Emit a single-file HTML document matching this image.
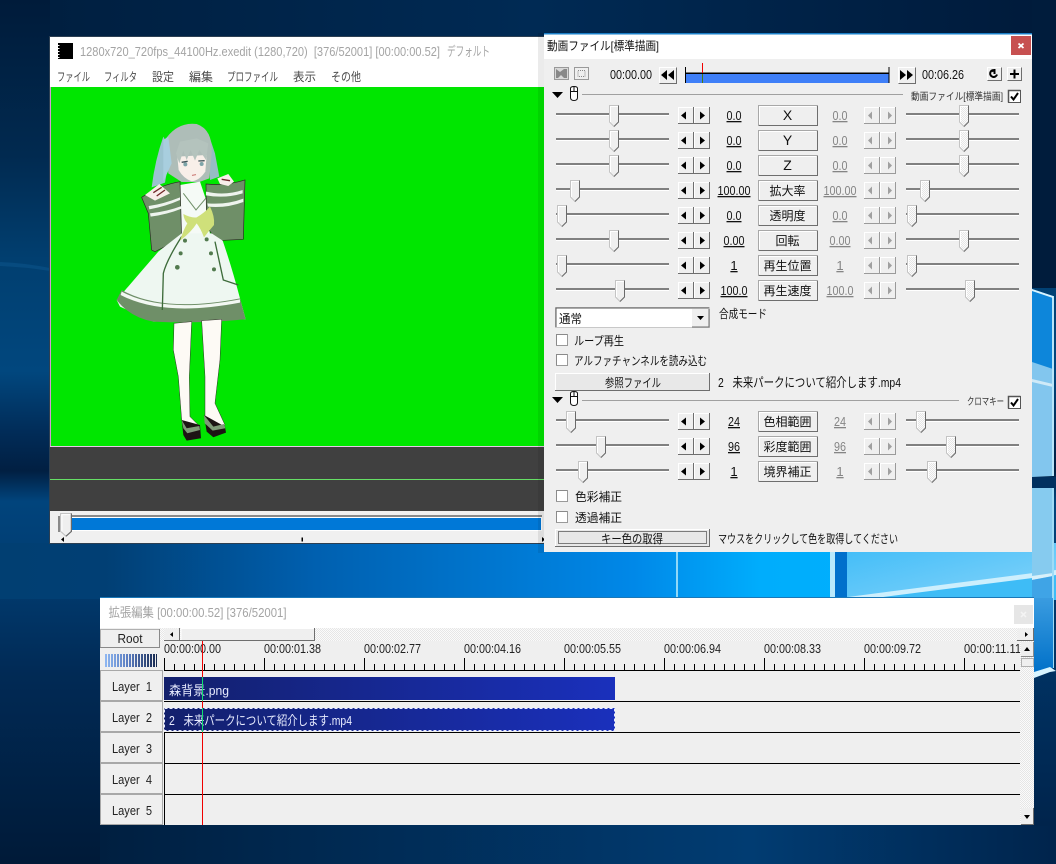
<!DOCTYPE html>
<html lang="ja"><head><meta charset="utf-8"><title>AviUtl</title>
<style>
html,body{margin:0;padding:0;background:#001c3c;overflow:hidden}
svg{display:block}
text{font-family:"Liberation Sans","Noto Sans CJK JP",sans-serif;font-size:12px;fill:#111;white-space:pre}
.m{fill:#4a4a4a}
.t{fill:#a4a4a4;font-size:13px}
.n{font-size:13px}
.v{text-decoration:underline;text-anchor:middle;font-size:13px}
.d{text-decoration:underline;text-anchor:middle;fill:#858585;font-size:13px}
.c{text-anchor:middle}
.x{font-size:14px}
.s{font-size:10px;fill:#333}
.cl{fill:#e8ecff;font-size:13px}
.r{fill:#222;font-size:13px}
</style></head><body>
<svg xmlns="http://www.w3.org/2000/svg" width="1056" height="864" viewBox="0 0 1056 864">
<defs>
<linearGradient id="bgv" x1="0" y1="0" x2="0" y2="1">
<stop offset="0" stop-color="#001b3a"/><stop offset=".18" stop-color="#012a50"/><stop offset=".3" stop-color="#013f70"/><stop offset=".43" stop-color="#01477e"/><stop offset=".5" stop-color="#012c58"/><stop offset=".545" stop-color="#011f42"/><stop offset=".58" stop-color="#01447c"/><stop offset=".66" stop-color="#013d72"/><stop offset=".78" stop-color="#012a55"/><stop offset="1" stop-color="#001a38"/>
</linearGradient>
<linearGradient id="bgtop"><stop offset="0" stop-color="#001f40"/><stop offset=".48" stop-color="#002a54"/><stop offset="1" stop-color="#001a3a"/></linearGradient>
<linearGradient id="bgbot"><stop offset="0" stop-color="#001f40"/><stop offset=".68" stop-color="#013c72"/><stop offset="1" stop-color="#00244c"/></linearGradient>
<linearGradient id="bgmid"><stop offset="0" stop-color="#013f72"/><stop offset=".1" stop-color="#013f74"/><stop offset=".3" stop-color="#0060b0"/><stop offset=".6" stop-color="#0088e8"/><stop offset=".72" stop-color="#00adfc"/><stop offset="1" stop-color="#00b4ff"/></linearGradient>
<linearGradient id="rstrip" x1="0" y1="0" x2="0" y2="1"><stop offset="0" stop-color="#01386c"/><stop offset="1" stop-color="#00244c"/></linearGradient>
<linearGradient id="sky" x1="0" y1="0" x2="1" y2="1"><stop offset="0" stop-color="#3fbcf8"/><stop offset="1" stop-color="#86d4fa"/></linearGradient>
<linearGradient id="pane" x1="0" y1="0" x2="0" y2="1"><stop offset="0" stop-color="#3a9ce0"/><stop offset="1" stop-color="#0070c8"/></linearGradient>
<linearGradient id="clip1" gradientUnits="userSpaceOnUse" x1="164" y1="0" x2="615" y2="0"><stop offset="0" stop-color="#13206c"/><stop offset="1" stop-color="#1a30bc"/></linearGradient>
<linearGradient id="strip" gradientUnits="userSpaceOnUse" x1="105" y1="0" x2="157" y2="0"><stop offset="0" stop-color="#8fb8f2"/><stop offset=".45" stop-color="#5a7cc0"/><stop offset="1" stop-color="#16284f"/></linearGradient>
<pattern id="dith" width="2" height="2" patternUnits="userSpaceOnUse"><rect width="2" height="2" fill="#fbfbfb"/><rect width="1" height="1" fill="#e6e6e6"/><rect x="1" y="1" width="1" height="1" fill="#e6e6e6"/></pattern>
<clipPath id="rulerclip"><rect x="160" y="641" width="860" height="30"/></clipPath>
<g id="thumb"><path d="M.5,.5H9.5V17L5,21.5L.5,17Z" fill="#efefef" stroke="#c4c4c4"/><path d="M1.500,17V1.500H9" fill="none" stroke="#fff"/><path d="M9.500,.5V17L5,21.500" fill="none" stroke="#6a6a6a"/></g>
<g id="thumbd"><path d="M.5,.5H9.5V17L5,21.5L.5,17Z" fill="url(#dith)" stroke="#c4c4c4"/><path d="M1.500,17V1.500H9" fill="none" stroke="#fff"/><path d="M9.500,.5V17L5,21.500" fill="none" stroke="#6a6a6a"/></g>
<g id="sb"><rect width="16" height="17" fill="#efefef"/><path d="M.5,16V.5H15" fill="none" stroke="#fff"/><path d="M0,16.5H15.5V0" fill="none" stroke="#6e6e6e"/></g>
<g id="sbd"><rect width="16" height="17" fill="#efefef"/><path d="M.5,16V.5H15" fill="none" stroke="#fff"/><path d="M0,16.5H15.5V0" fill="none" stroke="#9a9a9a"/></g>
<g id="base">
<rect x="556" y="-1" width="113" height="2" fill="#808080"/><rect x="556" y="1" width="113" height="1" fill="#fff"/>
<rect x="906" y="-1" width="113" height="2" fill="#808080"/><rect x="906" y="1" width="113" height="1" fill="#fff"/>
<use href="#sb" x="678" y="-7"/><use href="#sb" x="694" y="-7"/>
<path d="M681,1.500L686,-2.500V5.500Z M705,1.500L700,-2.500V5.500Z" fill="#000"/>
<use href="#sbd" x="864" y="-7"/><use href="#sbd" x="880" y="-7"/>
<path d="M868,1.500L872,-2.500V5.500Z M892,1.500L888,-2.500V5.500Z" fill="#a0a0a0"/>
<rect x="758.500" y="-8.500" width="59" height="20" fill="#efefef" stroke="#a8a8a8"/>
<path d="M759.500,10V-7.500H816" fill="none" stroke="#fff"/>
<path d="M759,11.500H817.500V-8" fill="none" stroke="#6e6e6e"/>
</g>
<g id="sec"><path d="M552,0H563L557.500,6Z" fill="#000"/><path d="M570.500,-3.500V5.500Q570.500,8.500 574,8.500Q577.500,8.500 577.500,5.500V-3.500Q577.500,-5.500 574,-5.500Q570.500,-5.500 570.500,-3.500ZM570.500,-.500H577.500M574,-5.500V-.500" fill="#fff" stroke="#111"/></g>
<g id="chk"><rect x=".5" y=".5" width="12" height="12" fill="#fff" stroke="#555" stroke-width="1"/><path d="M.5,12.500V.5H12.500" fill="none" stroke="#555" stroke-width="1.500"/><path d="M3,6.500L5.500,9.500L10,3" fill="none" stroke="#000" stroke-width="2"/></g>
<g id="cb"><rect x=".5" y=".5" width="11" height="11" fill="#fff" stroke="#9a9a9a"/><path d="M.5,11V.5H11" fill="none" stroke="#8a8a8a"/></g>
</defs>

<!-- desktop -->
<rect width="1056" height="864" fill="url(#bgv)"/>
<rect x="50" width="1006" height="37" fill="url(#bgtop)"/>
<rect x="1032" y="0" width="24" height="288" fill="#001c3c"/>
<rect x="0" y="543" width="1056" height="56" fill="url(#bgmid)"/>
<rect x="100" y="825" width="956" height="39" fill="url(#bgbot)"/>
<rect x="1032" y="598" width="24" height="228" fill="url(#rstrip)"/>
<path d="M0,262Q25,263 50,268V271Q25,267 0,266Z" fill="#15609c" opacity=".35"/>
<!-- windows logo -->
<rect x="676" y="543" width="2" height="56" fill="#8fd8f8"/>
<rect x="830" y="543" width="5" height="56" fill="#b8e8fc"/>
<rect x="835" y="543" width="12" height="56" fill="#0070cc"/>
<rect x="847" y="543" width="209" height="56" fill="url(#sky)"/>
<path d="M848,597L1056,570V599H848Z" fill="#cdeffd"/>
<path d="M860,600L1056,575V600Z" fill="#3ebcf6"/>
<path d="M1032,289L1053,296V476L1032,477Z" fill="#82c6ee"/>
<path d="M1032,289L1053,296V369L1032,362Z" fill="#0d86da"/>
<path d="M1032,379L1053,384V387L1032,382Z" fill="#cfeaf8"/>
<rect x="1052" y="296" width="2" height="180" fill="#b8e6fa"/>
<path d="M1032,289L1053,296V298L1032,291Z" fill="#d8f4ff"/>
<rect x="1032" y="477" width="24" height="11" fill="#01305f"/>
<rect x="1032" y="488" width="21" height="110" fill="#86cbef"/>
<path d="M1032,576L1053,573V576L1032,580Z" fill="#d8f0fa"/>
<path d="M1032,580L1053,576V600H1032Z" fill="#3fa4e6"/>
<rect x="1052" y="488" width="2" height="180" fill="#9fdcf6"/>
<path d="M1034,598H1053V668L1034,674Z" fill="url(#pane)"/>
<path d="M1034,672L1050,667L1056,671L1050,672L1034,678Z" fill="#d8f4ff"/>

<!-- main window -->
<rect x="49.500" y="36.500" width="496" height="507" fill="#f0f0f0" stroke="#2c3f52"/>
<rect x="50" y="37" width="495" height="50" fill="#fff"/>
<rect x="60" y="43" width="13" height="16" fill="#000"/>
<path d="M58,43h2v16h-2z" fill="#000"/>
<path d="M58,45h1.500v1h-1.500zM58,48h1.500v1h-1.500zM58,51h1.500v1h-1.500zM58,54h1.500v1h-1.500zM58,57h1.500v1h-1.500z" fill="#fff"/>
<text x="80" y="56" class="t" textLength="360" lengthAdjust="spacingAndGlyphs">1280x720_720fps_44100Hz.exedit (1280,720)  [376/52001] [00:00:00.52]</text>
<text x="447" y="56" class="t" textLength="43" lengthAdjust="spacingAndGlyphs">デフォルト</text>
<text x="57" y="81" class="m" textLength="33" lengthAdjust="spacingAndGlyphs">ファイル</text>
<text x="104" y="81" class="m" textLength="33" lengthAdjust="spacingAndGlyphs">フィルタ</text>
<text x="152" y="81" class="m" textLength="22" lengthAdjust="spacingAndGlyphs">設定</text>
<text x="189" y="81" class="m" textLength="24" lengthAdjust="spacingAndGlyphs">編集</text>
<text x="227" y="81" class="m" textLength="51" lengthAdjust="spacingAndGlyphs">プロファイル</text>
<text x="293" y="81" class="m" textLength="23" lengthAdjust="spacingAndGlyphs">表示</text>
<text x="331" y="81" class="m" textLength="30" lengthAdjust="spacingAndGlyphs">その他</text>
<rect x="51" y="87" width="494" height="359" fill="#00e600"/>
<rect x="50" y="87" width="1" height="360" fill="#d49ad4"/>
<rect x="50" y="446" width="495" height="1" fill="#e8c8e8"/>
<rect x="50" y="447" width="495" height="64" fill="#404040"/>
<rect x="50" y="479" width="495" height="1" fill="#66e066"/>
<rect x="50" y="511" width="495" height="32" fill="#f0f0f0"/>
<rect x="60" y="515" width="482" height="2" fill="#8a8a8a"/>
<rect x="60" y="517" width="482" height="14" fill="#fff"/>
<rect x="60" y="518" width="481" height="12" fill="#0078d7"/>
<g transform="translate(60,513)"><use href="#thumb" transform="scale(1.200,1.080)"/></g>
<rect x="58" y="516" width="2" height="16" fill="#8a8a8a"/>
<path d="M61,539.500L64,537V542Z M301.500,537.500h1.500v4h-1.500z M542,537V542L545,539.500Z" fill="#000"/>

<!-- character -->
<g transform="translate(100,110) scale(.3333)">
<path d="M190,80Q165,150 155,232L195,218L212,120Z" fill="#9cc3d0"/>
<path d="M325,70L345,130L358,200L330,210Z" fill="#97bcc4"/>
<path d="M198,85Q235,35 290,42Q338,58 335,130L328,205L298,216L245,216L205,190Z" fill="#aebdb8"/>
<path d="M190,90L205,80L215,160L190,215Z" fill="#a8cede"/>
<path d="M232,140L320,135L316,185Q298,212 275,214Q250,205 236,180Z" fill="#f8efe9"/>
<path d="M228,130L238,160L250,122L260,150L272,120L285,152L298,120L318,150L325,100L290,85L240,95Z" fill="#b4c3bd"/>
<path d="M245,157L263,154M295,153L314,152" stroke="#41555a" stroke-width="4" fill="none"/>
<ellipse cx="256" cy="163" rx="6" ry="6" fill="#7da4a8"/><ellipse cx="305" cy="162" rx="6" ry="6" fill="#7da4a8"/>
<path d="M276,196L288,194" stroke="#c8706c" stroke-width="3"/>
<path d="M240,225L300,215L325,290L330,380L240,385Z" fill="#f5faf6"/>
<path d="M250,250L288,300L320,262" stroke="#6f8f68" stroke-width="3" fill="none"/>
<path d="M125,262Q180,225 240,215L245,385L165,425L155,420L145,310Z" fill="#6f8f68" stroke="#2a2a22" stroke-width="2"/>
<path d="M318,222Q380,228 435,210L430,388L350,392L320,350Z" fill="#6f8f68" stroke="#2a2a22" stroke-width="2"/>
<path d="M146,288Q190,282 240,262V270Q195,290 148,298Z M150,310Q200,305 245,288V296Q200,314 152,320Z" fill="#eef4ee"/>
<path d="M318,245Q375,258 428,240V250Q375,266 318,256Z M322,280Q380,285 430,266V276Q380,295 324,290Z" fill="#eef4ee"/>
<path d="M135,255L178,222L210,250L165,272Z" fill="#f8eeea"/><path d="M160,248L185,232M170,258L195,240" stroke="#702828" stroke-width="4"/>
<path d="M352,205L385,192L402,215L385,228L360,222Z" fill="#f8eeea"/><path d="M365,208L390,212" stroke="#702828" stroke-width="4"/>
<path d="M245,370L335,370L368,392Q395,470 420,565L437,628L300,630L160,635L60,590L50,570Q110,500 175,425Z" fill="#eef7f1"/>
<path d="M50,570L65,540Q190,610 420,565L437,628Q300,642 160,635Q90,622 50,570Z" fill="#6f8f68"/>
<path d="M65,545Q190,612 420,568V578Q190,622 62,555Z" fill="#f2f8f2"/>
<path d="M245,380Q200,450 190,490L187,600M345,395L370,510L415,525" stroke="#3d6b3a" stroke-width="4" fill="none"/>
<path d="M250,312Q275,325 290,322Q312,310 330,290Q345,320 342,345Q325,365 312,382Q302,355 290,340Q275,365 240,392Q250,360 262,340Q252,330 250,312Z" fill="#cfe07a"/>
<circle cx="255" cy="392" r="6" fill="#527a4e"/><circle cx="320" cy="388" r="6" fill="#527a4e"/><circle cx="242" cy="430" r="6" fill="#527a4e"/><circle cx="333" cy="430" r="6" fill="#527a4e"/><circle cx="232" cy="472" r="7" fill="#527a4e"/><circle cx="342" cy="478" r="6" fill="#527a4e"/>
<path d="M222,640L275,635L268,800L270,920L300,950L260,965L245,930L235,800L220,720Z" fill="#fdfaf5" stroke="#33302a" stroke-width="1.500"/>
<path d="M305,632L365,628L360,750L345,880L375,945L345,958L315,920L315,800Z" fill="#fdfaf5" stroke="#33302a" stroke-width="1.500"/>
<path d="M245,930L300,945L303,985L260,992L250,975Z" fill="#1d1414"/>
<path d="M245,930L260,955L298,948L300,960L262,970L250,955Z" fill="#7f9a78"/>
<path d="M312,915L375,950L378,968L340,982L320,965Z" fill="#1d1414"/>
<path d="M312,915L340,950L372,942L376,955L338,962L314,940Z" fill="#7f9a78"/>
</g>

<!-- properties window -->
<rect x="538" y="33" width="6" height="520" fill="#000" opacity=".08"/>
<rect x="544" y="33" width="488" height="519" fill="#efefef"/>
<rect x="544" y="33" width="488" height="1.500" fill="#1a7fc8"/>
<rect x="544" y="34.500" width="488" height="24.500" fill="#fff"/>
<text x="547" y="50" textLength="112" lengthAdjust="spacingAndGlyphs" fill="#111">動画ファイル[標準描画]</text>
<rect x="1011" y="36" width="20" height="19" fill="#c75050"/>
<path d="M1018.500,43.500L1023.500,48M1023.500,43.500L1018.500,48" stroke="#fff" stroke-width="1.800"/>

<rect x="554.500" y="67.500" width="14" height="12" fill="#d8d8d8" stroke="#999"/>
<path d="M556,69L560,72L564,69H567V78H564L561,75L558,78H556Z" fill="#888"/>
<rect x="574.500" y="67.500" width="14" height="12" fill="#efefef" stroke="#999"/>
<rect x="578" y="70.500" width="7" height="6" fill="#efefef" stroke="#888" stroke-dasharray="1 1"/>
<text x="610" y="79" class="n" textLength="42" lengthAdjust="spacingAndGlyphs">00:00.00</text>
<rect x="659" y="67" width="18" height="17" fill="#efefef"/><path d="M659.500,83V67.500H676" fill="none" stroke="#fff"/><path d="M676.500,67.500V83.500H659.500" fill="none" stroke="#6e6e6e"/>
<path d="M661,75L667,70V80ZM668,75L674,70V80Z" fill="#000"/>
<rect x="685" y="73" width="204" height="10" fill="#3f7ff8"/>
<rect x="685" y="72.500" width="204" height="1.500" fill="#000"/>
<rect x="685" y="67" width="1" height="16" fill="#000"/><rect x="888.500" y="67" width="1" height="16" fill="#000"/>
<rect x="702" y="63" width="1" height="10" fill="#f00000"/><rect x="702" y="74" width="1" height="9" fill="#4a7a10"/>
<rect x="898" y="67" width="18" height="17" fill="#efefef"/><path d="M898.500,83V67.500H915" fill="none" stroke="#fff"/><path d="M915.500,67.500V83.500H898.500" fill="none" stroke="#6e6e6e"/>
<path d="M900,70L906,75L900,80ZM907,70L913,75L907,80Z" fill="#000"/>
<text x="922" y="79" class="n" textLength="42" lengthAdjust="spacingAndGlyphs">00:06.26</text>
<rect x="987" y="67" width="15" height="14" fill="#efefef"/><path d="M987.500,80V67.500H1001" fill="none" stroke="#fff"/><path d="M1001.500,67.500V80.500H987.500" fill="none" stroke="#6e6e6e"/>
<path d="M994,70a3.500,3.500 0 1 0 3,4.500M994,70l-2,1.500M994.500,69v5" fill="none" stroke="#000" stroke-width="2"/>
<rect x="1007" y="67" width="15" height="14" fill="#efefef"/><path d="M1007.500,80V67.500H1021" fill="none" stroke="#fff"/><path d="M1021.500,67.500V80.500H1007.500" fill="none" stroke="#6e6e6e"/>
<path d="M1010,74H1019M1014.500,69.500V78.500" stroke="#000" stroke-width="2"/>

<use href="#sec" y="92"/>
<rect x="582" y="94" width="321" height="1" fill="#a0a0a0"/>
<text x="911" y="100" class="s" textLength="92" lengthAdjust="spacingAndGlyphs">動画ファイル[標準描画]</text>
<use href="#chk" x="1008" y="90"/>

<g transform="translate(0,114)"><use href="#base"/><use href="#thumb" x="609" y="-9"/><use href="#thumbd" x="959" y="-9"/>
<text x="734" y="6" class="v" textLength="15" lengthAdjust="spacingAndGlyphs">0.0</text><text x="787.500" y="6" class="c x">X</text><text x="840" y="6" class="d" textLength="15" lengthAdjust="spacingAndGlyphs">0.0</text></g>
<g transform="translate(0,139)"><use href="#base"/><use href="#thumb" x="609" y="-9"/><use href="#thumbd" x="959" y="-9"/>
<text x="734" y="6" class="v" textLength="15" lengthAdjust="spacingAndGlyphs">0.0</text><text x="787.500" y="6" class="c x">Y</text><text x="840" y="6" class="d" textLength="15" lengthAdjust="spacingAndGlyphs">0.0</text></g>
<g transform="translate(0,164)"><use href="#base"/><use href="#thumb" x="609" y="-9"/><use href="#thumbd" x="959" y="-9"/>
<text x="734" y="6" class="v" textLength="15" lengthAdjust="spacingAndGlyphs">0.0</text><text x="787.500" y="6" class="c x">Z</text><text x="840" y="6" class="d" textLength="15" lengthAdjust="spacingAndGlyphs">0.0</text></g>
<g transform="translate(0,189)"><use href="#base"/><use href="#thumb" x="570" y="-9"/><use href="#thumbd" x="920" y="-9"/>
<text x="734" y="6" class="v" textLength="33" lengthAdjust="spacingAndGlyphs">100.00</text><text x="787.500" y="6" class="c">拡大率</text><text x="840" y="6" class="d" textLength="33" lengthAdjust="spacingAndGlyphs">100.00</text></g>
<g transform="translate(0,214)"><use href="#base"/><use href="#thumb" x="557" y="-9"/><use href="#thumbd" x="907" y="-9"/>
<text x="734" y="6" class="v" textLength="15" lengthAdjust="spacingAndGlyphs">0.0</text><text x="787.500" y="6" class="c">透明度</text><text x="840" y="6" class="d" textLength="15" lengthAdjust="spacingAndGlyphs">0.0</text></g>
<g transform="translate(0,239)"><use href="#base"/><use href="#thumb" x="609" y="-9"/><use href="#thumbd" x="959" y="-9"/>
<text x="734" y="6" class="v" textLength="21" lengthAdjust="spacingAndGlyphs">0.00</text><text x="787.500" y="6" class="c">回転</text><text x="840" y="6" class="d" textLength="21" lengthAdjust="spacingAndGlyphs">0.00</text></g>
<g transform="translate(0,264)"><use href="#base"/><use href="#thumb" x="557" y="-9"/><use href="#thumbd" x="907" y="-9"/>
<text x="734" y="6" class="v">1</text><text x="787.500" y="6" class="c">再生位置</text><text x="840" y="6" class="d">1</text></g>
<g transform="translate(0,289)"><use href="#base"/><use href="#thumb" x="615" y="-9"/><use href="#thumbd" x="965" y="-9"/>
<text x="734" y="6" class="v" textLength="27" lengthAdjust="spacingAndGlyphs">100.0</text><text x="787.500" y="6" class="c">再生速度</text><text x="840" y="6" class="d" textLength="27" lengthAdjust="spacingAndGlyphs">100.0</text></g>

<rect x="555.500" y="307.500" width="154" height="20" fill="#fff" stroke="#c8c8c8"/>
<path d="M556,327V308H709" fill="none" stroke="#555"/>
<rect x="692" y="309" width="17" height="18" fill="#efefef"/><path d="M709,309V327H692" fill="none" stroke="#6e6e6e"/>
<path d="M697,316H704L700.500,320Z" fill="#000"/>
<text x="559" y="323" textLength="23" lengthAdjust="spacingAndGlyphs">通常</text>
<text x="719" y="318" textLength="48" lengthAdjust="spacingAndGlyphs">合成モード</text>
<use href="#cb" x="556" y="334"/><text x="574" y="345" textLength="50" lengthAdjust="spacingAndGlyphs">ループ再生</text>
<use href="#cb" x="556" y="354"/><text x="574" y="365" textLength="133" lengthAdjust="spacingAndGlyphs">アルファチャンネルを読み込む</text>
<rect x="555" y="373" width="155" height="18" fill="#e8e8e8"/><path d="M555.500,390V373.500H709" fill="none" stroke="#fff"/><path d="M555,390.500H709.500V373" fill="none" stroke="#6e6e6e"/>
<text x="605" y="387" textLength="56" lengthAdjust="spacingAndGlyphs">参照ファイル</text>
<text x="718" y="387" class="n" textLength="183" lengthAdjust="spacingAndGlyphs">2   未来パークについて紹介します.mp4</text>

<use href="#sec" y="397"/>
<rect x="582" y="400" width="377" height="1" fill="#a0a0a0"/>
<text x="967" y="405" class="s" textLength="37" lengthAdjust="spacingAndGlyphs">クロマキー</text>
<use href="#chk" x="1008" y="396"/>

<g transform="translate(0,420)"><use href="#base"/><use href="#thumb" x="566" y="-9"/><use href="#thumbd" x="916" y="-9"/>
<text x="734" y="6" class="v" textLength="12" lengthAdjust="spacingAndGlyphs">24</text><text x="787.500" y="6" class="c">色相範囲</text><text x="840" y="6" class="d" textLength="12" lengthAdjust="spacingAndGlyphs">24</text></g>
<g transform="translate(0,445)"><use href="#base"/><use href="#thumb" x="596" y="-9"/><use href="#thumbd" x="946" y="-9"/>
<text x="734" y="6" class="v" textLength="12" lengthAdjust="spacingAndGlyphs">96</text><text x="787.500" y="6" class="c">彩度範囲</text><text x="840" y="6" class="d" textLength="12" lengthAdjust="spacingAndGlyphs">96</text></g>
<g transform="translate(0,470)"><use href="#base"/><use href="#thumb" x="578" y="-9"/><use href="#thumbd" x="927" y="-9"/>
<text x="734" y="6" class="v">1</text><text x="787.500" y="6" class="c">境界補正</text><text x="840" y="6" class="d">1</text></g>

<use href="#cb" x="556" y="490"/><text x="575" y="501" textLength="47" lengthAdjust="spacingAndGlyphs">色彩補正</text>
<use href="#cb" x="556" y="511"/><text x="575" y="522" textLength="47" lengthAdjust="spacingAndGlyphs">透過補正</text>
<rect x="555" y="529" width="155" height="18" fill="#e8e8e8"/><path d="M555.500,546V529.500H709" fill="none" stroke="#fff"/><path d="M555,546.500H709.500V529" fill="none" stroke="#6e6e6e"/>
<rect x="558.500" y="531.500" width="148" height="12" fill="none" stroke="#111" stroke-dasharray="1 1"/>
<text x="601" y="543" textLength="62" lengthAdjust="spacingAndGlyphs">キー色の取得</text>
<text x="718" y="543" textLength="180" lengthAdjust="spacingAndGlyphs">マウスをクリックして色を取得してください</text>

<!-- timeline window -->
<rect x="100" y="597" width="934" height="1" fill="#1a78b8"/>
<rect x="100" y="598" width="934" height="227" fill="#efefef"/>
<rect x="100" y="598" width="934" height="30" fill="#fff"/>
<text x="108.500" y="617" class="t" textLength="178" lengthAdjust="spacingAndGlyphs">拡張編集 [00:00:00.52] [376/52001]</text>
<rect x="1014" y="605" width="19" height="19" fill="#e6e6e6"/>
<path d="M1021,612L1026,617M1026,612L1021,617" stroke="#f4f4f4" stroke-width="1.500"/>
<rect x="160" y="628" width="874" height="13" fill="url(#dith)"/>
<rect x="1020" y="641" width="14" height="184" fill="url(#dith)"/>
<rect x="100.500" y="629.500" width="59" height="18" fill="#efefef" stroke="#b0b0b0"/><path d="M100,647.500H159.500V629" fill="none" stroke="#8a8a8a"/>
<text x="130" y="643" class="c r" textLength="25" lengthAdjust="spacingAndGlyphs">Root</text>
<line x1="105" y1="660.500" x2="157" y2="660.500" stroke="url(#strip)" stroke-width="13" stroke-dasharray="2 1"/>
<rect x="164.500" y="628.500" width="15" height="12" fill="#efefef"/><path d="M179.500,628V640.500H164" fill="none" stroke="#6e6e6e"/>
<path d="M170,634.500L173,632V637Z" fill="#000"/>
<rect x="180.500" y="628.500" width="134" height="12" fill="#efefef"/><path d="M181,640V628.500H314" fill="none" stroke="#fff"/><path d="M314.500,628V640.500H180" fill="none" stroke="#6e6e6e"/>
<rect x="1017.500" y="628.500" width="16" height="12" fill="#efefef"/><path d="M1033.500,628V640.500H1017" fill="none" stroke="#6e6e6e"/>
<path d="M1028,634.500L1025,632V637Z" fill="#000"/>
<rect x="1021" y="642" width="13" height="15" fill="#efefef"/><path d="M1033.500,642V656.500H1021" fill="none" stroke="#8a8a8a"/>
<path d="M1027,647L1024,651H1030Z" fill="#000"/>
<rect x="1021.500" y="658.500" width="12" height="8" fill="#efefef" stroke="#b0b0b0"/>
<rect x="1021" y="808" width="13" height="17" fill="#efefef"/><path d="M1033.500,808V824.500H1021" fill="none" stroke="#6e6e6e"/>
<path d="M1027,819L1024,815H1030Z" fill="#000"/>

<g clip-path="url(#rulerclip)">
<text x="164" y="653" class="r" textLength="57" lengthAdjust="spacingAndGlyphs">00:00:00.00</text>
<text x="264" y="653" class="r" textLength="57" lengthAdjust="spacingAndGlyphs">00:00:01.38</text>
<text x="364" y="653" class="r" textLength="57" lengthAdjust="spacingAndGlyphs">00:00:02.77</text>
<text x="464" y="653" class="r" textLength="57" lengthAdjust="spacingAndGlyphs">00:00:04.16</text>
<text x="564" y="653" class="r" textLength="57" lengthAdjust="spacingAndGlyphs">00:00:05.55</text>
<text x="664" y="653" class="r" textLength="57" lengthAdjust="spacingAndGlyphs">00:00:06.94</text>
<text x="764" y="653" class="r" textLength="57" lengthAdjust="spacingAndGlyphs">00:00:08.33</text>
<text x="864" y="653" class="r" textLength="57" lengthAdjust="spacingAndGlyphs">00:00:09.72</text>
<text x="964" y="653" class="r" textLength="57" lengthAdjust="spacingAndGlyphs">00:00:11.11</text>
</g>
<line x1="164" y1="664" x2="1020" y2="664" stroke="#000" stroke-width="12" stroke-dasharray="1 99"/>
<line x1="164" y1="667" x2="1020" y2="667" stroke="#000" stroke-width="6" stroke-dasharray="1 9"/>
<rect x="164" y="670" width="856" height="1" fill="#000"/>

<rect x="164" y="671" width="856" height="154" fill="#efefef"/>
<rect x="164" y="701" width="856" height="1" fill="#000"/>
<rect x="164" y="732" width="856" height="1" fill="#000"/>
<rect x="164" y="763" width="856" height="1" fill="#000"/>
<rect x="164" y="794" width="856" height="1" fill="#000"/>
<rect x="164" y="733" width="1" height="92" fill="#000"/>
<g fill="#efefef" stroke="#a8a8a8">
<rect x="100.500" y="670.500" width="62" height="30"/>
<rect x="100.500" y="701.500" width="62" height="30"/>
<rect x="100.500" y="732.500" width="62" height="30"/>
<rect x="100.500" y="763.500" width="62" height="30"/>
<rect x="100.500" y="794.500" width="62" height="30"/>
</g>
<text x="112" y="691" class="r" textLength="40" lengthAdjust="spacingAndGlyphs">Layer  1</text>
<text x="112" y="722" class="r" textLength="40" lengthAdjust="spacingAndGlyphs">Layer  2</text>
<text x="112" y="753" class="r" textLength="40" lengthAdjust="spacingAndGlyphs">Layer  3</text>
<text x="112" y="784" class="r" textLength="40" lengthAdjust="spacingAndGlyphs">Layer  4</text>
<text x="112" y="815" class="r" textLength="40" lengthAdjust="spacingAndGlyphs">Layer  5</text>

<rect x="164" y="677" width="451" height="23" fill="url(#clip1)"/>
<rect x="164" y="708" width="451" height="23" fill="url(#clip1)"/>
<rect x="164.500" y="708.500" width="450" height="22" fill="none" stroke="#e8ecff" stroke-dasharray="3 2"/>
<text x="169" y="695" class="cl" textLength="60" lengthAdjust="spacingAndGlyphs">森背景.png</text>
<text x="169" y="725" class="cl" textLength="183" lengthAdjust="spacingAndGlyphs">2   未来パークについて紹介します.mp4</text>

<rect x="202" y="641" width="1" height="184" fill="#f00000"/>
<rect x="202" y="677" width="1" height="24" fill="#10e070"/>
<rect x="202" y="708" width="1" height="24" fill="#10e070"/>
</svg>
</body></html>
